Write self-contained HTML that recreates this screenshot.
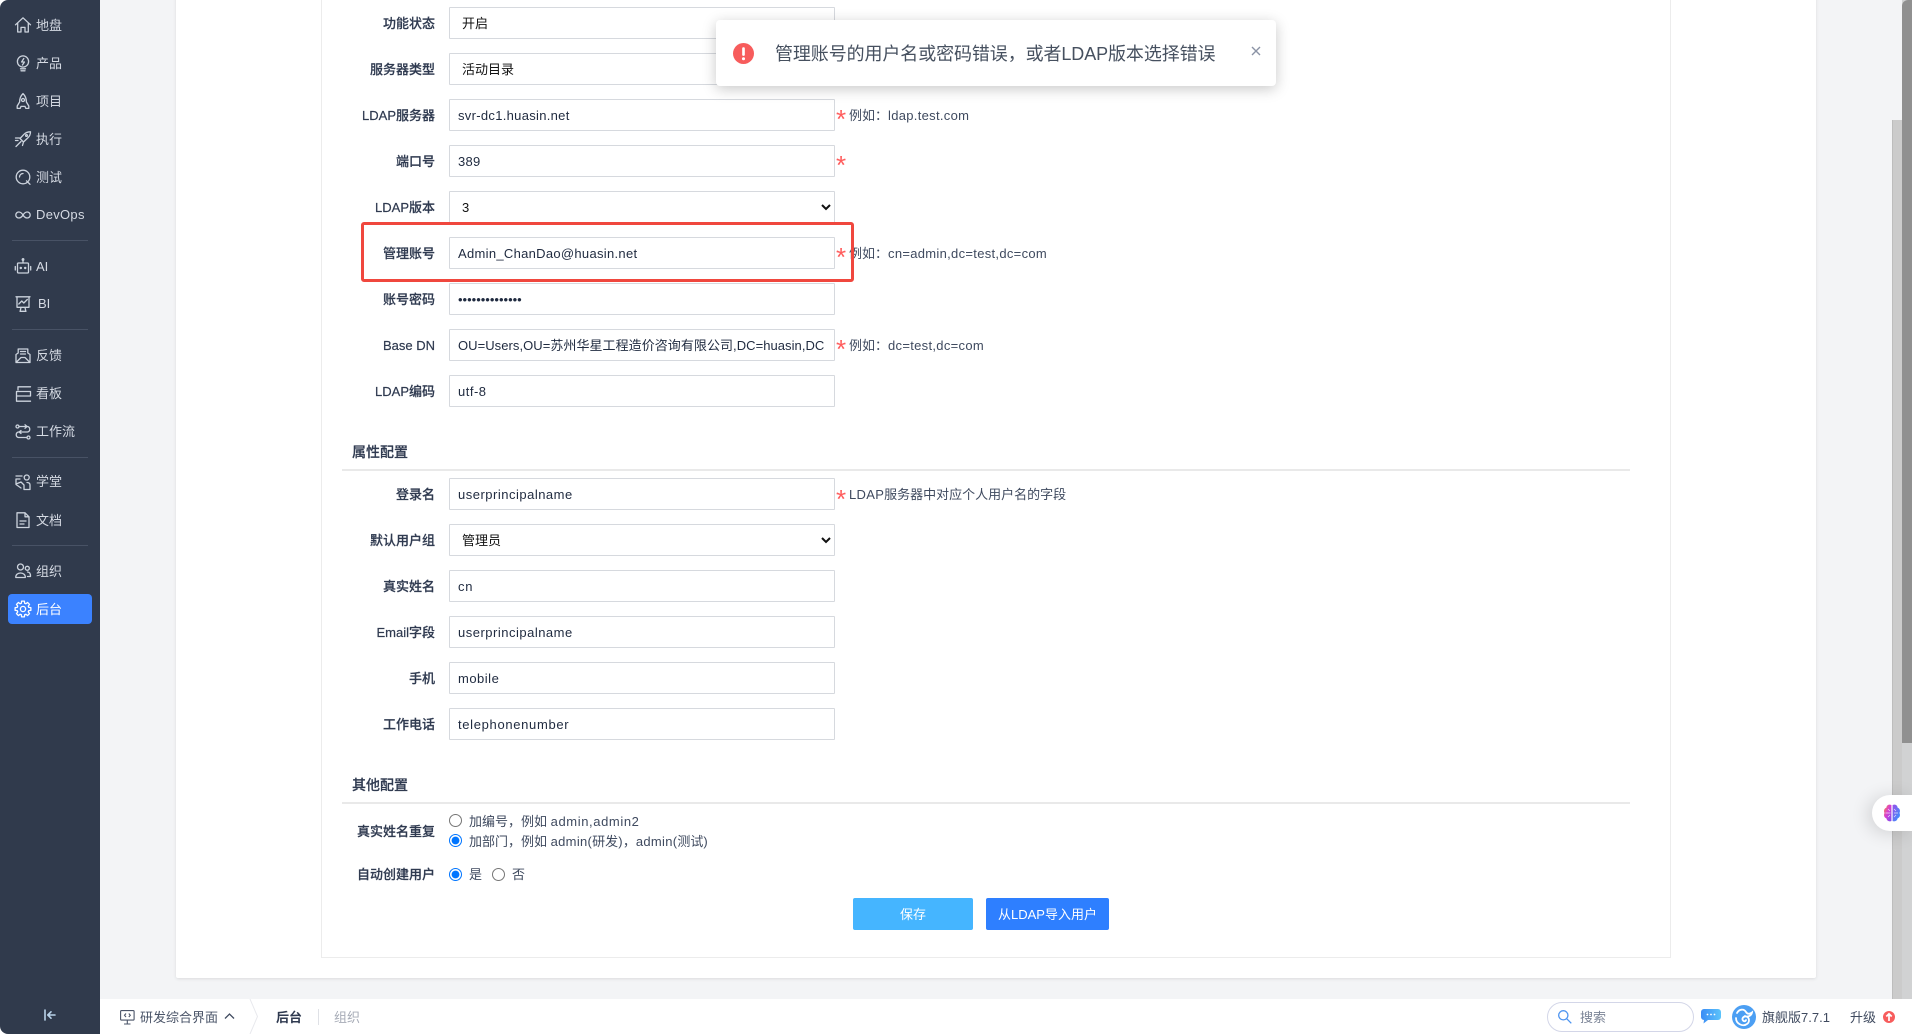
<!DOCTYPE html>
<html lang="zh"><head><meta charset="utf-8"><title>LDAP</title>
<style>
*{box-sizing:border-box}
html,body{margin:0;padding:0;width:1912px;height:1034px;overflow:hidden;background:#fff}
body{font:13px/20px "Liberation Sans","Noto Sans CJK SC",sans-serif;color:#313c52;position:relative}
div,span.a,svg.a{position:absolute}
#main{left:100px;top:0;width:1792px;height:999px;background:#f3f4f6}
#sb1{left:1892px;top:0;width:10px;height:999px;background:#f3f4f6}
#sb1t{left:1892px;top:120px;width:10px;height:879px;background:#cbcbcb;border-left:1px solid #bdbdbd}
#sb2{left:1902px;top:0;width:10px;height:999px;background:#d1d2d3}
#sb2t{left:1902px;top:0;width:10px;height:743px;background:#909090;border-top-left-radius:6px}
#panel{left:176px;top:-10px;width:1640px;height:988px;background:#fff;border-radius:2px;box-shadow:0 1px 3px rgba(0,0,0,.1)}
#inner{left:321px;top:-10px;width:1350px;height:968px;border:solid #ececec;border-width:0 1px 1px 1px}
#side{left:0;top:0;width:100px;height:1034px;background:#303a4c;border-radius:8px 0 0 8px}
.m{left:36px;color:#d5dae3;width:60px;line-height:20px;font-size:13px;white-space:nowrap;margin-top:1px}
.ln{left:12px;width:76px;height:1px;background:#485265}
#act{left:8px;top:594px;width:84px;height:30px;background:#3b82ff;border-radius:4px}
.l{left:300px;width:135px;text-align:right;line-height:20px;font-weight:500;color:#2f3a50;white-space:nowrap;margin-top:1px;-webkit-text-stroke:.2px #2f3a50}
.i{left:449px;width:386px;height:32px;border:1px solid #d6d9de;border-radius:1px;background:#fff;line-height:32px;padding:0 8px;color:#1f2a3f;white-space:nowrap;overflow:hidden;letter-spacing:.3px}
select{position:absolute;left:449px;width:386px;height:32px;border:1px solid #d6d9de;border-radius:1px;background:#fff;padding:0 8px;font:13px "Liberation Sans","Noto Sans CJK SC",sans-serif;color:#111;margin:0}
.st{color:#ff5d5d;font-size:26px;left:836px;line-height:20px;font-family:"Liberation Sans",sans-serif}
.h{left:849px;color:#3f4a5f;line-height:20px;white-space:nowrap;margin-top:1px}
.h b{font-weight:400;letter-spacing:.3px}
.sec{left:352px;font-size:14px;font-weight:500;color:#2f3a50;line-height:20px;-webkit-text-stroke:.2px #2f3a50}
.hr{left:342px;width:1288px;height:2px;background:#e9e9e9}
input[type=radio]{position:absolute;margin:0;width:13px;height:13px}
.t{color:#3f4a5f;white-space:nowrap;line-height:20px}
.t b{font-weight:400;letter-spacing:.3px}
#red{left:361px;top:222px;width:493px;height:60px;border:3px solid #f0473e;border-radius:3px}
#toast{left:716px;top:20px;width:560px;height:66px;background:#fff;border-radius:4px;box-shadow:0 3px 14px rgba(0,0,0,.22)}
#ttxt{left:775px;top:42px;font-size:18px;line-height:24px;color:#46505f;white-space:nowrap;letter-spacing:-.1px}
#bar{left:0;top:999px;width:1912px;height:35px}
.btn{top:898px;height:32px;color:#fff;text-align:center;line-height:33px;border-radius:2px}
</style></head><body>
<div id="main"></div><div id="sb1"></div><div id="sb1t"></div><div id="sb2"></div><div id="sb2t"></div>
<div id="panel"></div><div id="inner"></div>

<div class="l" style="top:13px">功能状态</div><select style="top:7px"><option>开启</option></select>
<div class="l" style="top:59px">服务器类型</div><select style="top:53px"><option>活动目录</option></select>
<div class="l" style="top:105px">LDAP服务器</div><div class="i" style="top:99px">svr-dc1.huasin.net</div>
<div class="st" style="top:109px">*</div><div class="h" style="top:105px">例如：<b>ldap.test.com</b></div>
<div class="l" style="top:151px">端口号</div><div class="i" style="top:145px">389</div>
<div class="st" style="top:155px">*</div>
<div class="l" style="top:197px">LDAP版本</div><select style="top:191px"><option>3</option></select>
<div class="l" style="top:243px">管理账号</div><div class="i" style="top:237px">Admin_ChanDao@huasin.net</div>
<div class="st" style="top:247px">*</div><div class="h" style="top:243px">例如：<b>cn=admin,dc=test,dc=com</b></div>
<div class="l" style="top:289px">账号密码</div><div class="i" style="top:283px;letter-spacing:0">••••••••••••••</div>
<div class="l" style="top:335px">Base DN</div><div class="i" style="top:329px;padding:0"><span style="position:absolute;left:8px;top:0;width:367px;overflow:hidden;display:block;letter-spacing:.05px">OU=Users,OU=苏州华星工程造价咨询有限公司,DC=huasin,DC=net</span></div>
<div class="st" style="top:339px">*</div><div class="h" style="top:335px">例如：<b>dc=test,dc=com</b></div>
<div class="l" style="top:381px">LDAP编码</div><div class="i" style="top:375px;letter-spacing:.5px">utf-8</div>

<div class="sec" style="top:442px">属性配置</div><div class="hr" style="top:469px"></div>
<div class="l" style="top:484px">登录名</div><div class="i" style="top:478px;letter-spacing:.5px">userprincipalname</div>
<div class="st" style="top:489px">*</div><div class="h" style="top:484px"><b>LDAP</b>服务器中对应个人用户名的字段</div>
<div class="l" style="top:530px">默认用户组</div><select style="top:524px"><option>管理员</option></select>
<div class="l" style="top:576px">真实姓名</div><div class="i" style="top:570px;letter-spacing:.8px">cn</div>
<div class="l" style="top:622px">Email字段</div><div class="i" style="top:616px;letter-spacing:.5px">userprincipalname</div>
<div class="l" style="top:668px">手机</div><div class="i" style="top:662px;letter-spacing:.5px">mobile</div>
<div class="l" style="top:714px">工作电话</div><div class="i" style="top:708px;letter-spacing:.67px">telephonenumber</div>

<div class="sec" style="top:775px">其他配置</div><div class="hr" style="top:802px"></div>
<div class="l" style="top:821px">真实姓名重复</div>
<input type="radio" name="a" style="left:449px;top:814px"><div class="t" style="left:469px;top:812px">加编号，例如 <b style="letter-spacing:.6px">admin,admin2</b></div>
<input type="radio" name="a" checked style="left:449px;top:834px"><div class="t" style="left:469px;top:832px">加部门，例如 <b>admin(</b>研发<b>)</b>，<b>admin(</b>测试<b>)</b></div>
<div class="l" style="top:865px;margin-top:0">自动创建用户</div>
<input type="radio" name="b" checked style="left:449px;top:868px"><div class="t" style="left:469px;top:865px">是</div>
<input type="radio" name="b" style="left:492px;top:868px"><div class="t" style="left:512px;top:865px">否</div>
<div class="btn" style="left:853px;width:120px;background:#45b5ff">保存</div>
<div class="btn" style="left:986px;width:123px;background:#2e7fff">从LDAP导入用户</div>

<div id="red"></div>
<div id="toast"></div>
<svg class="a" style="left:733px;top:43px" width="21" height="21" viewBox="0 0 22 22"><circle cx="11" cy="11" r="11" fill="#f75c5c"/><rect x="9.6" y="4.5" width="2.8" height="9" rx="1.2" fill="#fff"/><circle cx="11" cy="16.5" r="1.6" fill="#fff"/></svg>
<div id="ttxt">管理账号的用户名或密码错误，或者LDAP版本选择错误</div>
<svg class="a" style="left:1251px;top:46px" width="10" height="10" viewBox="0 0 10 10"><path d="M1 1L9 9M9 1L1 9" stroke="#8b93a5" stroke-width="1.4" fill="none"/></svg>

<div id="side"></div>
<div id="act"></div>
<div class="ln" style="top:240px"></div><div class="ln" style="top:329px"></div><div class="ln" style="top:457px"></div><div class="ln" style="top:545px"></div>
<div class="m" style="top:15px">地盘</div><div class="m" style="top:53px">产品</div><div class="m" style="top:91px">项目</div><div class="m" style="top:129px">执行</div><div class="m" style="top:167px">测试</div><div class="m" style="top:205px;letter-spacing:.3px;margin-top:0">DevOps</div>
<div class="m" style="top:256px">AI</div><div class="m" style="top:293px;left:38px">BI</div>
<div class="m" style="top:345px">反馈</div><div class="m" style="top:383px">看板</div><div class="m" style="top:421px">工作流</div>
<div class="m" style="top:472px;margin-top:0">学堂</div><div class="m" style="top:510px">文档</div><div class="m" style="top:561px">组织</div>
<div class="m" style="top:599px;color:#fff">后台</div>

<svg class="a" style="left:0;top:0" width="100" height="1034" viewBox="0 0 100 1034" fill="none" stroke="#ccd3dd" stroke-width="1.3" stroke-linecap="round" stroke-linejoin="round">
<g transform="translate(15,17)"><path d="M.5 7.8L8 .8l7.5 7M2.7 6.2V15H6v-4.6h4V15h3.3V6.2"/></g>
<g transform="translate(15,55)"><circle cx="8" cy="6.5" r="5.6"/><path d="M5.5 13.8h5M6 15.8h4M8.8 3.5L6.6 7h2.8L7.4 10"/></g>
<g transform="translate(15,93)"><path d="M8 .6C5.400 3 4.600 6 4.600 9L2.200 13v2.400h3l.8-2h4l.8 2h3V13l-2.400-4C11.400 6 10.600 3 8 .6z"/><circle cx="8" cy="7" r="1.500"/></g>
<g transform="translate(15,131)"><path d="M15.500 .8c-3 0-5 1-6.500 2.500L5 7.500l3.500 3.500 4.200-4C14.500 5.500 15.500 3.500 15.500 .8zM1 15.500l5-5M.5 7h4M.5 9.500h2.500M8.500 11l-1 3.500"/><circle cx="11.500" cy="4.500" r=".9"/></g>
<g transform="translate(15,169)"><circle cx="8" cy="8" r="6.800"/><path d="M11.500 11.800l3.500 3.500M4.500 8a3.500 3.500 0 0 1 3.500-3.500"/></g>
<g transform="translate(15,207)"><path d="M8 8C6.300 5.300 5 5 3.800 5a3 3 0 0 0 0 6C5 11 6.300 10.700 8 8c1.700-2.700 3-3 4.200-3a3 3 0 0 1 0 6C11 11 9.700 10.700 8 8z"/></g>
<g transform="translate(15,258)"><rect x="2.500" y="5" width="11" height="10" rx="1"/><path d="M8 5V2M.3 8.500v3.500M15.700 8.500v3.500"/><circle cx="8" cy="1.500" r=".8"/><circle cx="5.800" cy="10" r=".6"/><circle cx="10.200" cy="10" r=".6"/></g>
<g transform="translate(15,296)"><path d="M1 .8h14M2 .8v10.500h12V.8M3.800 8l3-3 2 2 3.500-3.500M5 15.300h6M6 11.300l-.8 4M10 11.300l.8 4"/></g>
<g transform="translate(15,348)"><path d="M1 6.500V14.500h14V6.500L12.800 5V1H3.200v4zM1 14.500l5-5h4l5 5M5.500 3.500h5M5.500 6h5"/></g>
<g transform="translate(15,386)"><path d="M3 .8h12.500M3 .8V4M1.500 5.500h14v4.500H1.500M1.500 5.500V15.200M1.500 15.200h14"/></g>
<g transform="translate(15,424)"><circle cx="2.500" cy="2.500" r="1.500"/><circle cx="13.500" cy="13.500" r="1.500"/><path d="M4 2.500h8.500a2.800 2.800 0 0 1 0 5.500h-9a2.800 2.800 0 0 0 0 5.500H12M10 .8l2 1.700-2 1.700M6 6.500L4 8l2 1.500"/></g>
<g transform="translate(15,474)"><path d="M1 2h6M1 5h4M1 5v5.500l5 3.500M1 10l5-2 3 3V15.500h6V11c0-1.500-1-2.500-3-2.500"/><circle cx="11.700" cy="3.500" r="2.500"/></g>
<g transform="translate(15,512)"><path d="M2 .8h8l4 4V15.500H2zM10 .8v4h4M5 9h6M5 12h4"/></g>
<g transform="translate(15,563)"><circle cx="5.500" cy="4" r="3"/><path d="M.8 14.500c-.5-6 9.900-6 9.500 0z"/><circle cx="12.300" cy="5.300" r="2"/><path d="M12.500 9c2 0 3.200 1.500 3 4.500h-3"/></g>
<g transform="translate(15,601)" stroke="#fff" stroke-width="1.300"><path d="M6.610 .12H9.390L9.650 2.230 10.910 2.750 12.590 1.450 14.550 3.410 13.250 5.090 13.770 6.350 15.880 6.610V9.390L13.770 9.650 13.250 10.910 14.550 12.590 12.590 14.550 10.910 13.250 9.650 13.770 9.390 15.880H6.610L6.350 13.770 5.090 13.250 3.410 14.550 1.450 12.590 2.750 10.910 2.230 9.650 .12 9.390V6.610L2.230 6.350 2.750 5.090 1.450 3.410 3.410 1.450 5.090 2.750 6.350 2.230z"/><circle cx="8" cy="8" r="2.600"/></g>
<g transform="translate(44,1009)"><path d="M1 1v10M11 6H4M7 2.800L3.800 6 7 9.200" stroke="#b9d3ea" stroke-width="1.600"/></g>
</svg>

<div id="bar" style="background:#fff;left:100px;width:1812px;border-bottom-right-radius:8px"></div>
<svg class="a" style="left:120px;top:1010px" width="15" height="15" viewBox="0 0 15 15" fill="none" stroke="#4a5468" stroke-width="1.100"><rect x=".6" y=".6" width="13.500" height="9.500" rx="1"/><path d="M7.300 10v3.500M4 14h6.500M6 3.500L4.500 5.300 6 7M8.800 3.500l1.500 1.800L8.800 7"/></svg>
<div class="t" style="left:140px;top:1008px;color:#4a5468">研发综合界面</div>
<svg class="a" style="left:224px;top:1012px" width="11" height="8" viewBox="0 0 11 8" fill="none"><path d="M1 6.500L5.500 2 10 6.500" stroke="#3f4a5f" stroke-width="1.300"/></svg>
<svg class="a" style="left:249px;top:999px" width="10" height="35" viewBox="0 0 10 35" fill="none"><path d="M1 0l7.500 17.500L1 35" stroke="#e8e9ed" stroke-width="1"/></svg>
<div class="t" style="left:276px;top:1008px;color:#2f3a50;font-weight:700">后台</div>
<div style="left:318px;top:1009px;width:1px;height:16px;background:#dfe1e6"></div>
<div class="t" style="left:334px;top:1008px;color:#a6abb6">组织</div>

<div style="left:1547px;top:1002px;width:147px;height:30px;border:1px solid #d3d6e8;border-radius:15px;background:#fff"></div>
<svg class="a" style="left:1557px;top:1009px" width="16" height="16" viewBox="0 0 16 16" fill="none" stroke="#4d94f0" stroke-width="1.300"><circle cx="6.300" cy="6.300" r="4.600"/><path d="M9.800 9.800l4.500 4.500"/></svg>
<div class="t" style="left:1580px;top:1008px;color:#7b8496">搜索</div>
<svg class="a" style="left:1701px;top:1009px" width="20" height="15" viewBox="0 0 20 15"><defs><linearGradient id="cg" x1="0" x2="1" y1="0" y2="0"><stop offset="0" stop-color="#3b8cf5"/><stop offset="1" stop-color="#5cc4fb"/></linearGradient></defs><path d="M3 0h14a3 3 0 0 1 3 3v5a3 3 0 0 1-3 3H7l-4.500 3.500L3 11a3 3 0 0 1-3-3V3a3 3 0 0 1 3-3z" fill="url(#cg)"/><circle cx="6.500" cy="5.500" r=".9" fill="#fff"/><circle cx="10" cy="5.500" r=".9" fill="#fff"/><circle cx="13.500" cy="5.500" r=".9" fill="#fff"/></svg>
<svg class="a" style="left:1732px;top:1005px" width="24" height="24" viewBox="0 0 24 24" fill="none"><circle cx="12" cy="12" r="12" fill="#4c9ff3"/><path d="M5 8c2-4 7-4.500 9-1 1.500 2.500 4 2 6 .5-.5 3-4 5-7 3.500M4 13c0 6 7 9 11 6 3-2 2.500-7-1-7.500-2.500-.5-4.500 2-3 4 1 1.200 2.800.8 3-.5" stroke="#fff" stroke-width="1.800" stroke-linecap="round"/></svg>
<div class="t" style="left:1762px;top:1008px;color:#3f4a5f">旗舰版<span>7.7.1</span></div>
<div class="t" style="left:1850px;top:1008px;color:#3f4a5f">升级</div>
<svg class="a" style="left:1883px;top:1011px" width="12" height="12" viewBox="0 0 12 12"><circle cx="6" cy="6" r="6" fill="#f75c5c"/><path d="M6 10V3M3.300 5.500L6 2.800l2.700 2.700" stroke="#fff" stroke-width="1.700" fill="none"/></svg>

<div style="left:1872px;top:795px;width:40px;height:36px;background:#fff;border-radius:18px 0 0 18px;box-shadow:-4px 2px 18px rgba(0,0,0,.14)"></div>
<svg class="a" style="left:1883px;top:804px" width="18" height="18" viewBox="0 0 18 18"><defs><linearGradient id="b1" x1="0" x2="1" y1="0" y2="1"><stop offset="0" stop-color="#ff8a3c"/><stop offset=".45" stop-color="#d83fd0"/><stop offset="1" stop-color="#7a4df0"/></linearGradient><linearGradient id="b2" x1="0" x2="1" y1="0" y2="1"><stop offset="0" stop-color="#9a4de8"/><stop offset="1" stop-color="#2f9bff"/></linearGradient></defs><path d="M8.400 1C5.500 0 3.500 1.500 3.500 3.500 1 4.500.5 7 1.500 9 .5 11 1 13.500 3.500 14.500 3.700 16.800 6.500 18 8.400 17z" fill="url(#b1)"/><path d="M9.600 1c2.900-1 4.900.5 4.900 2.500C17 4.500 17.500 7 16.500 9c1 2 .5 4.500-2 5.500-.2 2.300-3 3.500-4.900 2.500z" fill="url(#b2)"/><path d="M2.500 9h5M5 5l2 2M5 13l2-2M11 5l2 2M11 9h4M11 13l2-2" stroke="#fff" stroke-width=".7" fill="none" opacity=".8"/></svg>
</body></html>
